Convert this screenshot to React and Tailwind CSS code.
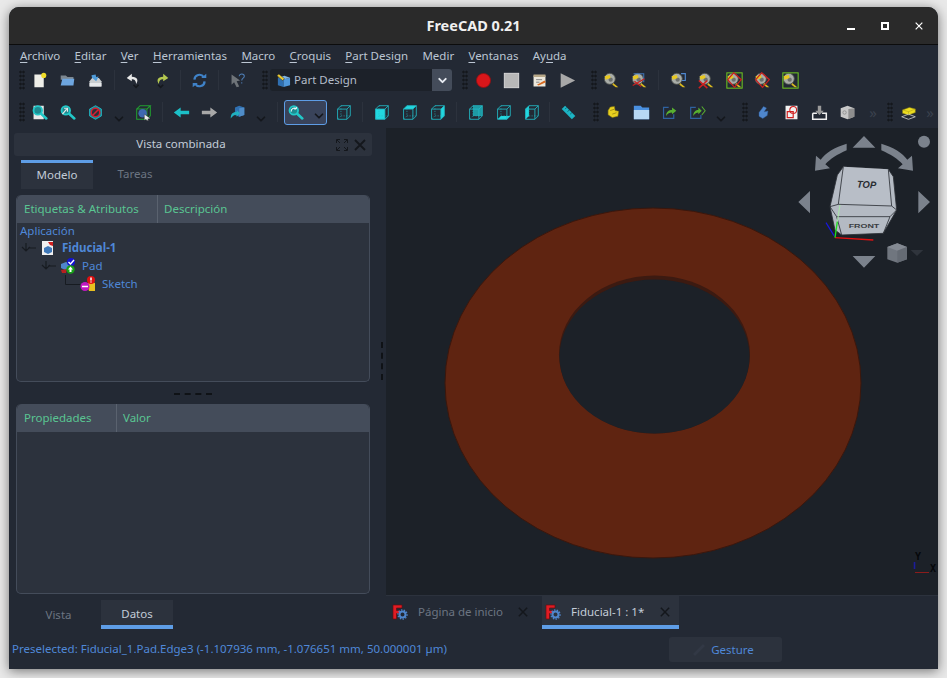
import { ChevronDown } from "lucide-react"

const Svg = ({ children, size = "w-[17px] h-[17px]" }) => (
  <svg viewBox="0 0 20 20" className={size}>
    {children}
  </svg>
)

const Tape = ({ mark }) => (
  <Svg>
    <circle cx="8" cy="8" r="6.5" fill="#a9ada8" stroke="#4b4f4c" />
    <circle cx="9" cy="9" r="2.5" fill="#6c706d" />
    <path d="M2 5 L8 3.5 L9 7 L3 9 Z" fill="#e8c820" />
    <path d="M12 13 L18 18 L15 18 L11 15 Z" fill="#d8b820" />
    {mark === "plain" && <path d="M13 2 h5 v8 h-4" fill="none" stroke="#4f88d0" strokeWidth="1.4" />}
    {mark === "noblue" && (
      <>
        <path d="M3 2 h12 v10" fill="none" stroke="#3f76b8" strokeWidth="1.2" />
        <path d="M2 16 L16 8 M4 11 L12 17" stroke="#c81e1e" strokeWidth="1.4" />
      </>
    )}
    {mark === "x" && <path d="M1 10 L11 19 M11 10 L1 19" stroke="#d02020" strokeWidth="1.8" />}
    {mark === "diamond" && <path d="M9 1 L18 9 L10 18 L2 9 Z" fill="none" stroke="#c82020" strokeWidth="1.5" />}
    {mark === "greenbox" && <rect x="1" y="1" width="18" height="18" fill="none" stroke="#6fc820" strokeWidth="1.2" />}
    {mark === "greendiamond" && (
      <>
        <rect x="1" y="1" width="18" height="18" fill="none" stroke="#6fc820" strokeWidth="1.2" />
        <path d="M9 1 L18 9 L10 18 L2 9 Z" fill="none" stroke="#c82020" strokeWidth="1.5" />
      </>
    )}
  </Svg>
)

const WireCube = ({ face, stroke = "#22b8c4" }) => (
  <Svg>
    {face === "front" && <path d="M3 6 H14 V18 H3 Z" fill="#22d8e0" />}
    {face === "top" && <path d="M3 6 L7 2 H18 L14 6 Z" fill="#22d8e0" />}
    {face === "right" && <path d="M14 6 L18 2 V14 L14 18 Z" fill="#22d8e0" />}
    {face === "rear" && <path d="M7 2 H18 V14 H7 Z" fill="#1e9aa4" />}
    {face === "bottom" && <path d="M3 18 L7 14 H18 L14 18 Z" fill="#22d8e0" />}
    {face === "left" && <path d="M3 6 L7 2 V14 L3 18 Z" fill="#22d8e0" />}
    <path d="M3 6 H14 V18 H3 Z M3 6 L7 2 H18 L14 6 M18 2 V14 L14 18" fill="none" stroke={stroke} strokeWidth="1" />
    <path d="M7 2 V14 H18 M7 14 L3 18" fill="none" stroke={stroke} strokeWidth="0.7" strokeDasharray="1.5 1.5" />
  </Svg>
)

const Magnifier = ({ inner }) => (
  <>
    <circle cx="8" cy="7.5" r="5" fill="#1f8a90" stroke="#22c8c8" strokeWidth="2.2" />
    <path d="M12 11.5 L18 17" stroke="#22c8c8" strokeWidth="3" strokeLinecap="round" />
    {inner}
  </>
)

const Logo = ({ size = "w-[16px] h-[16px]" }) => (
  <svg viewBox="0 0 16 16" className={size}>
    <path d="M1 1 H10 V4 H4.5 V6.5 H8 V9.5 H4.5 V15 H1 Z" fill="#e01c24" stroke="#6a0c10" strokeWidth="0.7" />
    <circle cx="10.5" cy="10.5" r="3" fill="none" stroke="#4f86cc" strokeWidth="2" />
    <circle cx="10.5" cy="10.5" r="4.6" fill="none" stroke="#4f86cc" strokeWidth="1.2" strokeDasharray="1.4 1.4" />
  </svg>
)

const icons = {
  newDoc: (
    <Svg>
      <path d="M4 3 H15 V18 H4 Z" fill="#eeeee8" />
      <circle cx="15" cy="4" r="3" fill="#f0dc28" />
    </Svg>
  ),
  open: (
    <Svg>
      <path d="M2 4 H8 L10 6 H17 V9 H2 Z" fill="#7d8790" />
      <path d="M2 16 L4 8 H18 L17 16 Z" fill="#6ea6e0" />
    </Svg>
  ),
  save: (
    <Svg>
      <path d="M3 11 L6 7 H14 L17 11 V17 H3 Z" fill="#c9cdd0" />
      <path d="M3 13 H17 V17 H3 Z" fill="#e6e8ea" />
      <path d="M6 3 H11 V6 H14 L10 11 L6 6 Z" fill="#4f9ad8" transform="rotate(-12 10 7)" />
    </Svg>
  ),
  undo: (
    <Svg>
      <path d="M8 2 L2 7 L8 11 V8.5 C11 8.5 13 10 13 14 C16 10 15 5.5 8 5.5 Z" fill="#e8e8e8" />
      <path d="M10 15 L13 18 L16 15" fill="none" stroke="#15181d" strokeWidth="2" />
    </Svg>
  ),
  redo: (
    <Svg>
      <path d="M12 2 L18 7 L12 11 V8.5 C9 8.5 7 10 7 14 C4 10 5 5.5 12 5.5 Z" fill="#b4c850" />
      <path d="M6 15 L9 18 L12 15" fill="none" stroke="#15181d" strokeWidth="2" />
    </Svg>
  ),
  refresh: (
    <Svg>
      <path d="M4 9 A6 6 0 0 1 15 6 M16 11 A6 6 0 0 1 5 14" fill="none" stroke="#3f82c8" strokeWidth="2.6" />
      <path d="M12 7 H18 V2 Z M8 13 H2 V18 Z" fill="#3f82c8" />
    </Svg>
  ),
  help: (
    <Svg>
      <path d="M3 3 L13 10 L9 11 L12 17 L9 18 L6 12 L3 15 Z" fill="#6f7479" />
      <path d="M12 5 C12 1.5 18 1.5 18 5 C18 7.5 15 7 15 10 M15 12 V13.5" fill="none" stroke="#4f7fb8" strokeWidth="1.2" />
    </Svg>
  ),
  partDesign: (
    <svg viewBox="0 0 16 16" className="w-[15px] h-[15px]">
      <path d="M2 5 L8 7 V15 L2 13 Z" fill="#2f6fb0" />
      <path d="M8 7 L15 5 V13 L8 15 Z" fill="#4f98dc" />
      <path d="M2 5 L9 3 L15 5 L8 7 Z" fill="#7fb4e4" />
      <path d="M1 3 L3 1 L9 6 L7 8 Z" fill="#e8c830" stroke="#222" strokeWidth="0.5" />
    </svg>
  ),
  record: (
    <Svg>
      <circle cx="10" cy="10" r="8.3" fill="#d8161a" stroke="#901014" />
    </Svg>
  ),
  stop: (
    <Svg>
      <rect x="1.5" y="1.5" width="17" height="17" fill="#b8b8b8" stroke="#e0e0e0" />
    </Svg>
  ),
  macro: (
    <Svg>
      <path d="M3 4 H17 V17 H3 Z" fill="#ece8dc" />
      <path d="M3 3 H17 V6 H3 Z" fill="#b8a888" />
      <path d="M6 9 H13 M6 12 H10" stroke="#777" />
      <path d="M7 15 L16 10 L17.5 12 L9 16 Z" fill="#d86a20" />
    </Svg>
  ),
  play: (
    <Svg>
      <path d="M2 1.5 L19 10 L2 18.5 Z" fill="#a8a8a8" />
    </Svg>
  ),
  fitAll: (
    <Svg>
      <path d="M3 2 H15 V18 H3 Z" fill="#e8e8e8" />
      <Magnifier />
    </Svg>
  ),
  fitSel: (
    <Svg>
      <Magnifier inner={<path d="M4 12 L9 6 M6 5 H10 V9" fill="none" stroke="#e8e8e8" strokeWidth="1.4" />} />
    </Svg>
  ),
  drawStyle: (
    <Svg>
      <path d="M10 2 L17 6 V14 L10 18 L3 14 V6 Z" fill="#1d8a98" stroke="#22b8c4" />
      <circle cx="10" cy="10" r="5" fill="#283038" stroke="#d81e30" strokeWidth="1.8" />
      <path d="M6.5 13.5 L13.5 6.5" stroke="#d81e30" strokeWidth="1.8" />
    </Svg>
  ),
  boundBox: (
    <Svg>
      <path d="M2 6 H14 V18 H2 Z M2 6 L6 2 H18 L14 6 M18 2 V14 L14 18" fill="none" stroke="#22a030" strokeWidth="1.2" />
      <circle cx="9" cy="11" r="5" fill="#3f68b0" />
      <path d="M11 12 L18 17 L15 17.5 L16 19.5 L14 19.5 L13 18 L11 19 Z" fill="#eee" stroke="#222" strokeWidth="0.4" />
    </Svg>
  ),
  back: (
    <Svg>
      <path d="M1 10 L9 4 V8 H19 V12 H9 V16 Z" fill="#1cc0c8" />
    </Svg>
  ),
  forward: (
    <Svg>
      <path d="M19 10 L11 4 V8 H1 V12 H11 V16 Z" fill="#a8a8a8" />
    </Svg>
  ),
  syncView: (
    <Svg>
      <path d="M7 4 L12 2 L18 4 V13 L12 15 L7 13 Z" fill="#2f6fb0" />
      <path d="M12 5 L18 4 V13 L12 15 Z" fill="#4f8cc8" />
      <path d="M2 17 C2 11 5 9.5 9 9.5 V7 L13 11 L9 15 V12.5 C6 12.5 4 14 2 17 Z" fill="#20b0c0" />
    </Svg>
  ),
  zoomSel: (
    <Svg>
      <Magnifier
        inner={<path d="M5 9 A3.5 3.5 0 0 1 11 6 M11 6 L8.5 6 M11 6 V3.5" fill="none" stroke="#e8f8f8" strokeWidth="1.2" />}
      />
    </Svg>
  ),
  ruler: (
    <Svg>
      <path d="M2 6 L6 2 L18 14 L14 18 Z" fill="#1cb4c4" />
      <path d="M6 6 L8 4 M9 9 L11 7 M12 12 L14 10" stroke="#0c5a64" />
    </Svg>
  ),
  yellowPart: (
    <Svg size="w-[14px] h-[14px]">
      <path d="M6 3 L12 2 L13 8 L18 9 L17 16 L9 18 L3 14 L3 8 Z" fill="#e8d020" stroke="#8a7a10" strokeWidth="0.8" />
      <path d="M6 8 L12 6 M9 13 L15 11" stroke="#8a7a10" />
    </Svg>
  ),
  folder: (
    <Svg>
      <path d="M1 2 H9 L11 4 H19 V18 H1 Z" fill="#4a90e0" />
      <path d="M1 7 H19 V18 H1 Z" fill="#b8d8f4" />
    </Svg>
  ),
  linkArrow: (
    <Svg>
      <path d="M9 4 H3 V17 H15 V12" fill="none" stroke="#2f62a0" strokeWidth="1.4" />
      <path d="M6 14 C6 9 9 7 13 7 V4 L18 8 L13 12 V10 C10 10 8 11 6 14 Z" fill="#58b030" />
    </Svg>
  ),
  linkArrow2: (
    <Svg>
      <path d="M8 4 H2 V17 H14 V13" fill="none" stroke="#2f62a0" strokeWidth="1.4" />
      <path d="M5 14 C5 9 8 7 11 7 V4 L15 8 L11 12 V10 C9 10 7 11 5 14 Z" fill="#58b030" />
      <path d="M15 3 L19 8 L15 13" fill="none" stroke="#58b030" strokeWidth="1.2" />
    </Svg>
  ),
  blueShape: (
    <Svg size="w-[15px] h-[15px]">
      <path d="M10 2 L14 4 L11 9 L16 8 L15 14 L9 18 L4 15 L4 10 Z" fill="#4f86cc" stroke="#2f5c98" strokeWidth="0.6" />
    </Svg>
  ),
  sketchNew: (
    <Svg>
      <path d="M3 2 H17 V18 H3 Z" fill="#f2f2f2" />
      <circle cx="12" cy="7" r="4" fill="none" stroke="#d02020" strokeWidth="1.2" />
      <path d="M5 9 H12 V16 H5 Z" fill="none" stroke="#d02020" strokeWidth="1.4" />
    </Svg>
  ),
  importer: (
    <Svg>
      <path d="M2 11 H7 M13 11 H18 V18 H2 V11" fill="none" stroke="#f0f0f0" strokeWidth="1.8" />
      <path d="M8 2 H12 V8 H15 L10 13 L5 8 H8 Z" fill="#9a9a9a" />
    </Svg>
  ),
  grayCube: (
    <Svg>
      <path d="M2 5 L10 2 L18 5 V15 L10 18 L2 15 Z" fill="#c8c8c8" />
      <path d="M11 6 L18 5 V15 L11 18 Z" fill="#8e8e8e" />
      <circle cx="6.5" cy="10" r="2" fill="none" stroke="#8e8e8e" />
    </Svg>
  ),
  yellowBlock: (
    <Svg>
      <path d="M3 7 L11 4 L18 6 V10 L10 13 L3 11 Z" fill="#ecdc20" stroke="#8a8010" strokeWidth="0.6" />
      <path d="M3 7 L10 9 L18 6 M10 9 V13" fill="none" stroke="#a89a10" strokeWidth="0.6" />
      <path d="M2 15 L10 12 L18 15 L10 18 Z" fill="none" stroke="#c8c8c8" />
    </Svg>
  ),
}

const Btn = ({ children }) => <div className="w-[28px] h-[26px] shrink-0 flex items-center justify-center">{children}</div>

const Sep = ({ className = "w-[10px]" }) => (
  <div className={`${className} shrink-0 flex justify-center`}>
    <div className="w-px h-[20px] bg-[#2c323d]" />
  </div>
)

const Grip = ({ className = "w-[7px]" }) => (
  <div className={`${className} shrink-0 flex justify-center`}>
    <div className="w-[6px] h-[20px] bg-[radial-gradient(#14171c_1px,transparent_1.2px)] bg-[length:3px_4px]" />
  </div>
)

const More = () => (
  <div className="w-[20px] shrink-0 flex justify-center self-end">
    <ChevronDown className="w-[14px] h-[14px] text-[#14171c]" strokeWidth={3} />
  </div>
)

const Chevrons = ({ className }) => (
  <div className={`${className} shrink-0 text-[#3a414d] text-[15px] leading-none text-center`}>»</div>
)

const Mnemonic = ({ pre = "", u, post }) => (
  <span className="whitespace-nowrap">
    {pre}
    <span className="underline underline-offset-2">{u}</span>
    {post}
  </span>
)

const Header = ({ left, right, className }) => (
  <div className="h-[28px] shrink-0 flex bg-[#444c5a] rounded-t-[5px] text-[#5ac592]">
    <div className={`${className} flex items-center pl-[7px] border-r border-[#5a626f]`}>{left}</div>
    <div className="flex items-center pl-[6px]">{right}</div>
  </div>
)

const CloseX = ({ className = "w-[12px] h-[12px]", color = "#14171c" }) => (
  <svg viewBox="0 0 12 12" className={className}>
    <path d="M1 1 L11 11 M11 1 L1 11" stroke={color} strokeWidth="1.8" />
  </svg>
)

const TreeChevron = () => (
  <svg viewBox="0 0 16 10" className="w-[16px] h-[10px] mr-[-4px]">
    <path d="M6 0 V7 M2 4 L6 8 L10 4 M8 5 H16" fill="none" stroke="#171b21" strokeWidth="1.2" />
  </svg>
)

const Viewport = () => (
  <svg viewBox="386 128 552 467" className="w-[552px] h-[467px] block bg-[#1c2128]">
    <ellipse cx="653" cy="383" rx="208" ry="175" fill="#5f2411" stroke="#3a170d" strokeWidth="1" />
    <ellipse cx="654.5" cy="354.5" rx="95.5" ry="79" fill="#3c1a11" />
    <ellipse cx="654.5" cy="356.5" rx="95" ry="77" fill="#1c2128" />

    {/* navigation cube, traced in 3x coordinates */}
    <g transform="translate(780 125) scale(0.3333)">
      <path d="M252 33 L218 68 H286 Z M90 198 V265 L55 231 Z M415 198 V265 L450 231 Z M218 393 H286 L252 428 Z" fill="#7b828c" />
      <circle cx="432" cy="50" r="18" fill="#7b828c" />
      <path d="M200 56 C165 66 135 85 122 104 L108 92 L105 137 L150 130 L136 118 C150 102 172 88 200 76 Z" fill="#7b828c" />
      <path d="M304 56 C339 66 369 85 382 104 L396 92 L399 137 L354 130 L368 118 C354 102 332 88 304 76 Z" fill="#7b828c" />

      <path d="M190 125 L325 133 L340 155 L350 255 L310 325 L185 330 L165 315 L150 245 L172 150 Z" fill="#b4bac3" stroke="#2c3036" strokeWidth="2.5" />
      <path d="M190 125 L175 238 L335 243 L325 133" fill="#b8bec7" stroke="#2c3036" strokeWidth="2.5" />
      <path d="M150 245 L175 238 M335 243 L350 255 M150 245 L170 275 L330 275 L350 255 M170 275 L185 330 M330 275 L310 325" fill="none" stroke="#2c3036" strokeWidth="2.5" />
      <text x="259" y="189" textAnchor="middle" textLength="58" lengthAdjust="spacingAndGlyphs" fontFamily="Liberation Sans" fontStyle="italic" fontWeight="700" fontSize="30" fill="#2a2d32" transform="rotate(3 259 189)">TOP</text>
      <text x="252" y="309" textAnchor="middle" textLength="92" lengthAdjust="spacingAndGlyphs" fontFamily="Liberation Sans" fontWeight="700" fontSize="15" fill="#3a3d42">FRONT</text>
      <path d="M165 338 L280 345" stroke="#e01010" strokeWidth="4" />
      <path d="M165 338 L172 290" stroke="#20e020" strokeWidth="4" />
      <path d="M172 290 L180 240" stroke="#a8e8a8" strokeWidth="3" />
      <path d="M162 332 L138 293" stroke="#1818e0" strokeWidth="3.5" />

      <path d="M322 366 L352 355 L381 366 V403 L352 413 L322 403 Z" fill="#70767f" />
      <path d="M322 366 L352 377 L381 366 L352 355 Z" fill="#848a93" />
      <path d="M352 377 V413 L381 403 V366 Z" fill="#656b74" />
      <path d="M392 375 H430 L411 393 Z" fill="#2f343c" />
    </g>

    {/* corner axes */}
    <path d="M915 572.5 H929" stroke="#8a1c1c" strokeWidth="1" />
    <path d="M914.5 562 V569" stroke="#1c1c9a" strokeWidth="1.6" />
    <text x="918" y="560" textAnchor="middle" fontFamily="DejaVu Sans Mono" fontWeight="700" fontSize="10" fill="#05070a">Y</text>
    <text x="933" y="572" textAnchor="middle" fontFamily="DejaVu Sans Mono" fontWeight="700" fontSize="10" fill="#05070a">X</text>
  </svg>
)

export default function App() {
  return (
    <div className="w-[947px] h-[678px] overflow-hidden bg-[#e9e9e9] pl-[9px] pt-[7px] text-[11.5px] leading-[16px] font-['Noto_Sans',sans-serif]">
      <div className="w-[929px] h-[662px] flex flex-col rounded-t-[10px] overflow-hidden bg-[#232934] shadow-[0_2px_12px_rgba(0,0,0,0.5)]">
        {/* Title bar */}
        <div className="h-[38px] shrink-0 grid grid-cols-[1fr_auto_1fr] items-center bg-[#2a2a2a] border-b border-[#0c0c0c]">
          <div />
          <div className="text-[14.5px] font-bold text-[#f0f0f0] pb-px">FreeCAD 0.21</div>
          <div className="flex justify-end items-center pr-[15px] text-white">
            <div className="w-[8px] h-[2px] bg-white mt-[7px] mr-[26px]" />
            <div className="w-[8px] h-[8px] border-2 border-white mr-[26px]" />
            <CloseX className="w-[8px] h-[8px]" color="#ffffff" />
          </div>
        </div>

        {/* Menu bar */}
        <div className="h-[22px] shrink-0 flex items-center gap-[14.3px] pl-[11px] text-[#bcc6d3]">
          <Mnemonic u="A" post="rchivo" />
          <Mnemonic u="E" post="ditar" />
          <Mnemonic u="V" post="er" />
          <Mnemonic u="H" post="erramientas" />
          <Mnemonic u="M" post="acro" />
          <Mnemonic u="C" post="roquis" />
          <Mnemonic u="P" post="art Design" />
          <span>Medir</span>
          <Mnemonic u="V" post="entanas" />
          <Mnemonic pre="Ay" u="u" post="da" />
        </div>

        {/* Toolbar 1 */}
        <div className="h-[26px] shrink-0 flex items-center pl-[9px]">
          <Grip />
          <Btn>{icons.newDoc}</Btn>
          <Btn>{icons.open}</Btn>
          <Btn>{icons.save}</Btn>
          <Sep />
          <Btn>{icons.undo}</Btn>
          <Btn>{icons.redo}</Btn>
          <Sep />
          <Btn>{icons.refresh}</Btn>
          <Sep />
          <Btn>{icons.help}</Btn>
          <Grip className="w-[19px] pl-[8px]" />
          <div className="w-[182px] h-[22px] shrink-0 flex items-center bg-[#1c2129] rounded-[3px] text-[#b4bdca]">
            <div className="w-[24px] flex justify-center pl-[3px]">{icons.partDesign}</div>
            <div className="flex-1">Part Design</div>
            <div className="w-[20px] h-[22px] flex items-center justify-center bg-[#444c5a] rounded-r-[3px]">
              <ChevronDown className="w-[13px] h-[13px] text-[#e8ecf2]" strokeWidth={3.5} />
            </div>
          </div>
          <Grip className="w-[17px] pl-[9px]" />
          <Btn>{icons.record}</Btn>
          <Btn>{icons.stop}</Btn>
          <Btn>{icons.macro}</Btn>
          <Btn>{icons.play}</Btn>
          <Grip className="w-[16px] pl-[10px]" />
          <Btn><Tape /></Btn>
          <Btn><Tape mark="noblue" /></Btn>
          <Sep className="w-[11px]" />
          <Btn><Tape mark="plain" /></Btn>
          <Btn><Tape mark="x" /></Btn>
          <Btn><Tape mark="greendiamond" /></Btn>
          <Btn><Tape mark="diamond" /></Btn>
          <Btn><Tape mark="greenbox" /></Btn>
        </div>

        {/* Toolbar 2 */}
        <div className="h-[28px] shrink-0 mt-[5px] mb-[2px] flex items-center pl-[9px]">
          <Grip />
          <Btn>{icons.fitAll}</Btn>
          <Btn>{icons.fitSel}</Btn>
          <Btn>{icons.drawStyle}</Btn>
          <More />
          <Btn>{icons.boundBox}</Btn>
          <Sep />
          <Btn>{icons.back}</Btn>
          <Btn>{icons.forward}</Btn>
          <Btn>{icons.syncView}</Btn>
          <More />
          <Sep className="w-[13px]" />
          <div className="w-[43px] h-[25px] shrink-0 flex items-center bg-[#39435a] border border-[#5e9de6] rounded-[3px] pl-[2px]">
            {icons.zoomSel}
            <ChevronDown className="w-[14px] h-[14px] text-[#14171c] mt-[8px] ml-[8px] shrink-0" strokeWidth={3} />
          </div>
          <div className="w-[2px] shrink-0" />
          <Btn><WireCube /></Btn>
          <Sep />
          <Btn><WireCube face="front" /></Btn>
          <Btn><WireCube face="top" /></Btn>
          <Btn><WireCube face="right" /></Btn>
          <Sep />
          <Btn><WireCube face="rear" /></Btn>
          <Btn><WireCube face="bottom" /></Btn>
          <Btn><WireCube face="left" /></Btn>
          <Sep className="w-[9px]" />
          <Btn>{icons.ruler}</Btn>
          <Grip className="w-[17px] pl-[11px]" />
          <Btn>{icons.yellowPart}</Btn>
          <Btn>{icons.folder}</Btn>
          <Btn>{icons.linkArrow}</Btn>
          <Btn>{icons.linkArrow2}</Btn>
          <More />
          <Grip className="w-[18px] pl-[10px]" />
          <Btn>{icons.blueShape}</Btn>
          <Btn>{icons.sketchNew}</Btn>
          <Btn>{icons.importer}</Btn>
          <Btn>{icons.grayCube}</Btn>
          <Chevrons className="w-[24px]" />
          <Grip className="w-[9px]" />
          <Btn>{icons.yellowBlock}</Btn>
          <Chevrons className="w-[16px]" />
        </div>

        {/* Docks and viewport */}
        <div className="h-[501px] shrink-0 flex">
          <div className="w-[369px] shrink-0 flex flex-col pt-[5px] pl-[5px] pr-[6px]">
            <div className="h-[23px] shrink-0 flex items-center bg-[#2c323d] rounded-[3px] text-[#c3ccd8]">
              <div className="flex-1 text-center pl-[12px] pb-px">Vista combinada</div>
              <div className="flex items-center gap-[6px] pr-[6px]">
                <svg viewBox="0 0 12 12" className="w-[12px] h-[12px]">
                  <path d="M0.5 4 V0.5 H4 M8 0.5 H11.5 V4 M11.5 8 V11.5 H8 M4 11.5 H0.5 V8 M1 1 L4 4 M11 1 L8 4 M11 11 L8 8 M1 11 L4 8" fill="none" stroke="#14171c" strokeWidth="1" />
                </svg>
                <CloseX />
              </div>
            </div>

            <div className="h-[29px] shrink-0 mt-[4px] ml-[7px] flex items-center">
              <div className="w-[72px] h-[29px] flex items-center justify-center pb-[2px] bg-[#2c323d] border-t-[3px] border-[#5e9de6] text-[#c3ccd8]">Modelo</div>
              <div className="w-[84px] text-center text-[#6c7582] pb-px">Tareas</div>
            </div>

            <div className="h-[187px] shrink-0 mt-[6px] mx-[2px] flex flex-col bg-[#2c323d] border border-t-0 border-[#444c5a] rounded-[5px] overflow-hidden">
              <Header left="Etiquetas & Atributos" right="Descripción" className="w-[141px]" />
              <div className="text-[#4f88d8] leading-[18px]">
                <div className="pl-[3px] h-[16px] leading-[15px]">Aplicación</div>
                <div className="h-[18px] flex items-center pl-[3px]">
                  <TreeChevron />
                  <svg viewBox="0 0 16 16" className="w-[16px] h-[16px] ml-[8px]">
                    <path d="M2 1 H13 V15 H2 Z" fill="#f0f0f0" />
                    <path d="M4 8 L8 6 L12 8 V12 L8 14 L4 12 Z" fill="#3f78b8" />
                    <path d="M8 2 H13 V6 L10 5 Z" fill="#d02020" />
                  </svg>
                  <span className="font-bold ml-[6px]">Fiducial-1</span>
                </div>
                <div className="h-[18px] flex items-center pl-[23px]">
                  <TreeChevron />
                  <svg viewBox="0 0 16 16" className="w-[16px] h-[16px] ml-[8px]">
                    <path d="M1 6 L6 4 L10 6 V10 L5 12 L1 10 Z" fill="#4f86cc" />
                    <path d="M1 12 L7 11 L6 15 L2 15 Z" fill="#b82020" />
                    <circle cx="11" cy="4" r="4" fill="#1414d0" />
                    <path d="M8.5 4 L10.5 6 L14 2" fill="none" stroke="#fff" strokeWidth="1.4" />
                    <circle cx="10.5" cy="11.5" r="4.2" fill="#18a018" />
                    <path d="M10.5 8.5 L13 11.5 H11.5 V14 H9.5 V11.5 H8 Z" fill="#fff" />
                  </svg>
                  <span className="ml-[6px]">Pad</span>
                </div>
                <div className="h-[18px] flex items-center pl-[48px]">
                  <svg viewBox="0 0 15 18" className="w-[15px] h-[18px]">
                    <path d="M0.5 0 V9.5 H15" fill="none" stroke="#171b21" />
                  </svg>
                  <svg viewBox="0 0 16 16" className="w-[16px] h-[16px]">
                    <path d="M7 8 L10 5 L15 7 V15 H9 Z" fill="#e8c020" />
                    <circle cx="5" cy="10.5" r="4.5" fill="#c018c0" />
                    <path d="M2 10.5 H8" stroke="#fff" strokeWidth="1.6" />
                    <circle cx="11" cy="4" r="4" fill="#e01010" />
                    <path d="M11 1.5 V4.5 M11 5.5 V6.5" stroke="#fff" strokeWidth="1.5" />
                  </svg>
                  <span className="ml-[6px]">Sketch</span>
                </div>
              </div>
            </div>

            <div className="h-[22px] shrink-0 flex items-center justify-center">
              <div className="w-[38px] border-t-2 border-dashed border-[#0f1216] mt-[1px]" />
            </div>

            <div className="h-[190px] shrink-0 mx-[2px] flex flex-col bg-[#2c323d] border border-t-0 border-[#444c5a] rounded-[5px] overflow-hidden">
              <Header left="Propiedades" right="Valor" className="w-[100px]" />
            </div>

            <div className="h-[29px] shrink-0 mt-[6px] flex items-center ml-[2px]">
              <div className="w-[85px] text-center text-[#6c7582]">Vista</div>
              <div className="w-[72px] h-[29px] flex items-center justify-center pt-[3px] bg-[#2c323d] border-b-4 border-[#5e9de6] text-[#c3ccd8]">Datos</div>
            </div>
          </div>

          <div className="w-[8px] shrink-0 flex items-center justify-center pb-[36px]">
            <div className="h-[38px] border-l-2 border-dashed border-[#0f1216]" />
          </div>

          <div className="flex-1 flex flex-col">
            <Viewport />
            <div className="h-[34px] flex border-t border-[#2c323d] items-start">
              <div className="w-[156px] h-[33px] flex items-center pl-[6px] pb-[1px] text-[#6c7582]">
                <Logo />
                <span className="ml-[10px]">Página de inicio</span>
                <CloseX className="w-[10px] h-[10px] ml-[15px]" />
              </div>
              <div className="w-[137px] h-[33px] flex items-center pl-[3px] pt-[3px] bg-[#2c323d] border-b-4 border-[#5e9de6] text-[#c3ccd8]">
                <Logo />
                <span className="ml-[10px]">Fiducial-1 : 1*</span>
                <CloseX className="w-[10px] h-[10px] ml-[16px]" />
              </div>
            </div>
          </div>
        </div>

        {/* Status bar */}
        <div className="flex-1 flex items-center justify-between pl-[3px] pr-[156px] text-[#4f88d8]">
          <span>Preselected: Fiducial_1.Pad.Edge3 (-1.107936 mm, -1.076651 mm, 50.000001 µm)</span>
          <div className="w-[113px] h-[25px] flex items-center justify-center bg-[#2c323d] rounded-[3px] mt-[1px]">
            <svg viewBox="0 0 14 14" className="w-[14px] h-[14px] mr-[5px] ml-[-5px]">
              <path d="M2 12 L12 2" stroke="#323845" strokeWidth="3" />
            </svg>
            Gesture
          </div>
        </div>
      </div>
    </div>
  )
}
